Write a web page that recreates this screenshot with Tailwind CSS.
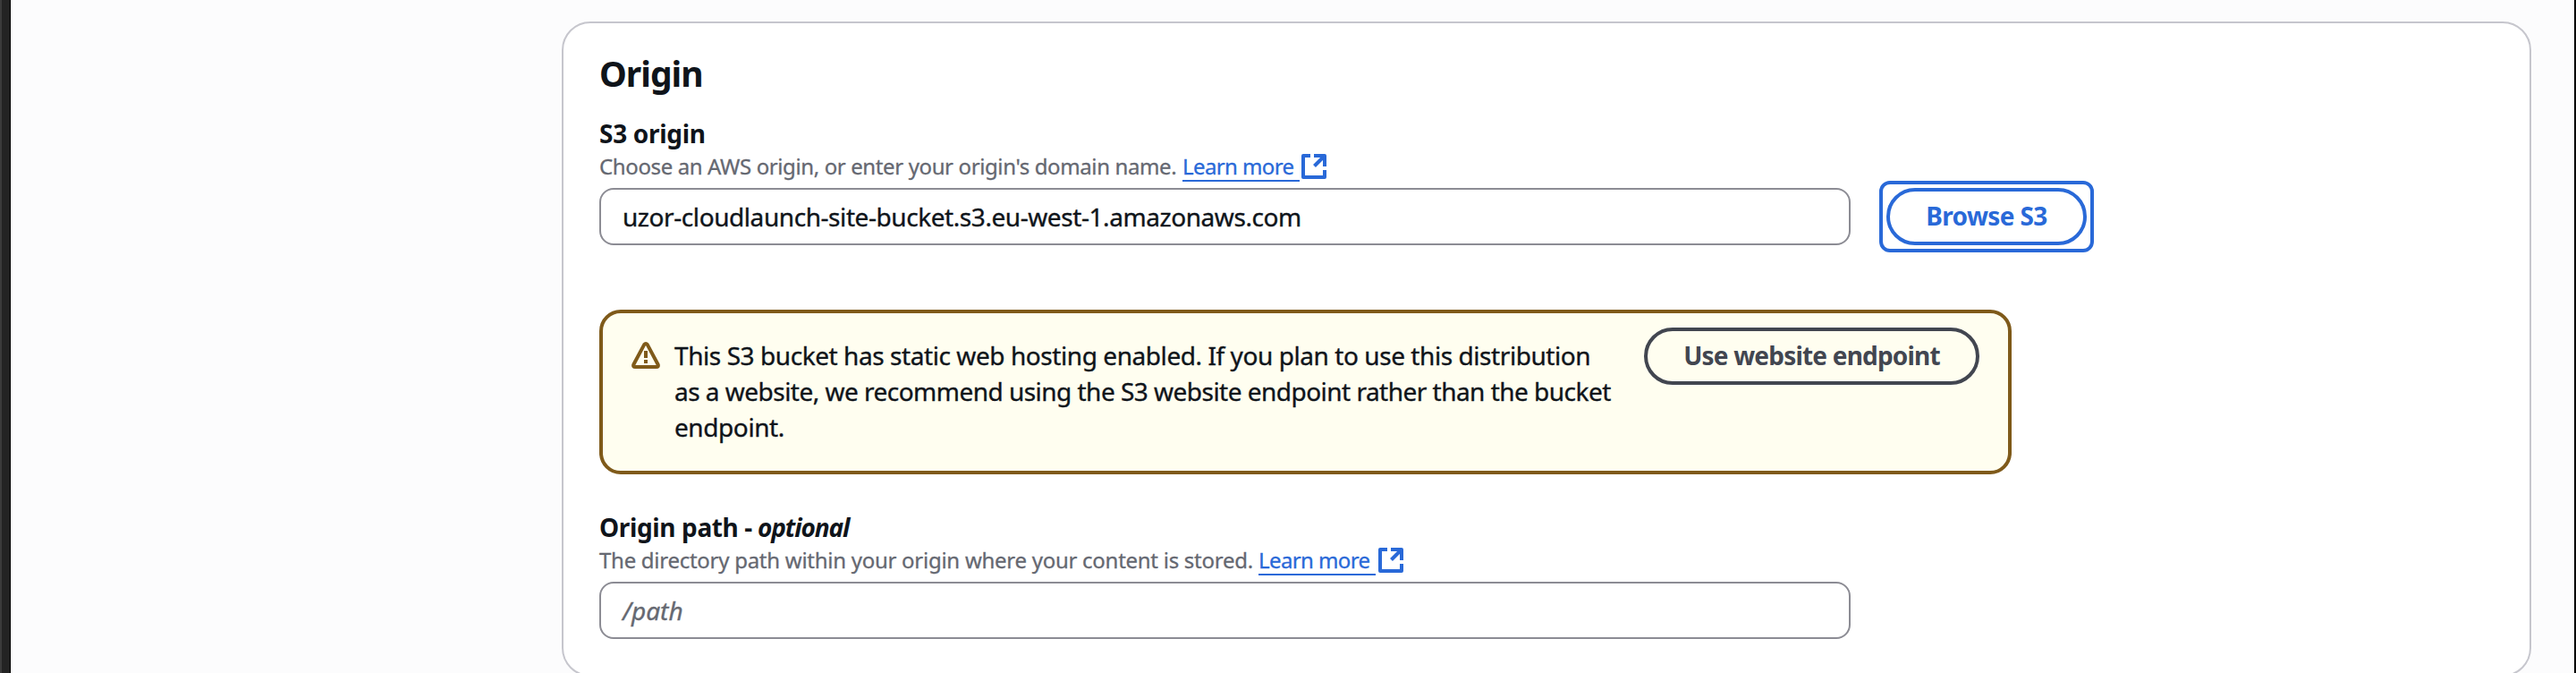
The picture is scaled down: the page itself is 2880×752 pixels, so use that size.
<!DOCTYPE html>
<html lang="en">
<head>
<meta charset="utf-8">
<title>Origin</title>
<script src="https://cdn.jsdelivr.net/npm/@tailwindcss/browser@4"></script>
</head>
<body class="flex h-[752px] w-[2880px] overflow-hidden bg-[#fcfcfd] font-['Noto_Sans',sans-serif] text-[28px] leading-10 text-[#0f141a]">
  <div class="w-3 shrink-0 border-l-2 border-r border-l-[#3b3b3b] border-r-black bg-[#232323]"></div>
  <main class="flex-1 pt-6 pl-[616px]">
    <section class="h-[732px] w-[2202px] rounded-[32px] border-2 border-[#c6c6cd] bg-white px-10 pt-8">
      <h2 class="text-[39px] leading-[48px] font-bold tracking-[-1px]">Origin</h2>

      <div class="mt-[23px]">
        <label class="block font-bold tracking-[-0.3px]">S3 origin</label>
        <p class="mt-px flex h-8 whitespace-nowrap text-2xl leading-8 tracking-[-0.38px] text-[#656871] [-webkit-text-stroke:0.3px]">
          <span class="w-[652px]">Choose an AWS origin, or enter your origin's domain name.</span>
          <a class="flex text-[#2969d8]">
            <span class="h-[33px] w-[131px] border-b-2 border-[#2969d8] tracking-[-0.6px]">Learn more</span>
            <svg class="mt-0.5 ml-0.5 size-7" viewBox="0 0 28 28" fill="none" stroke="currentColor" stroke-width="4" stroke-linejoin="round"><path d="M10 2H2v24h24v-8M14 2h12v12"/><path d="M26 2L14.5 13.5"/></svg>
          </a>
        </p>
        <div class="mt-2 flex">
          <div class="h-16 w-[1399px] rounded-2xl border-2 border-[#8c8c94] bg-white pl-6 leading-[60px] tracking-[-0.43px] [-webkit-text-stroke:0.35px]">uzor-cloudlaunch-site-bucket.s3.eu-west-1.amazonaws.com</div>
          <button class="relative ml-10 h-16 w-56 rounded-full border-4 border-[#2969d8] pb-0.5 text-center leading-[54px] font-bold tracking-[-0.6px] text-[#2969d8] before:absolute before:-inset-3 before:rounded-xl before:border-4 before:border-[#2969d8]">Browse S3</button>
        </div>
      </div>

      <div class="mt-[72px] flex h-[184px] w-[1579px] rounded-3xl border-4 border-[#7f5a1a] bg-[#fffef0] pl-8">
        <svg class="mt-8 h-[30px] w-8 shrink-0" viewBox="0 0 32 30" fill="none" stroke="#7f5a1a" stroke-width="4" stroke-linejoin="round"><path d="M14.2 3.1Q16 .9 17.8 3.1L29.6 25.2Q30.6 28 27.8 28H4.2Q1.400 28 2.400 25.2Z"/><path d="M16 10v8M16 20v4"/></svg>
        <p class="mt-[27px] ml-4 w-[1084px] whitespace-nowrap [-webkit-text-stroke:0.35px]"><span class="tracking-[-0.43px]">This S3 bucket has static web hosting enabled. If you plan to use this distribution</span><br><span class="tracking-[-0.52px]">as a website, we recommend using the S3 website endpoint rather than the bucket</span><br><span class="tracking-[-0.42px]">endpoint.</span></p>
        <button class="mt-4 h-16 w-[375px] rounded-full border-4 border-[#424650] pb-0.5 text-center leading-[54px] font-bold tracking-[-0.8px] text-[#424650]">Use website endpoint</button>
      </div>

      <div class="mt-[39px]">
        <label class="flex whitespace-nowrap font-bold"><span class="w-[177px] tracking-[-0.36px]">Origin path -</span><i class="tracking-[-1.1px]">optional</i></label>
        <p class="mt-px flex h-8 whitespace-nowrap text-2xl leading-8 tracking-[-0.27px] text-[#656871] [-webkit-text-stroke:0.3px]">
          <span class="w-[737px]">The directory path within your origin where your content is stored.</span>
          <a class="flex text-[#2969d8]">
            <span class="h-[33px] w-[131px] border-b-2 border-[#2969d8] tracking-[-0.6px]">Learn more</span>
            <svg class="mt-0.5 ml-[3px] size-7" viewBox="0 0 28 28" fill="none" stroke="currentColor" stroke-width="4" stroke-linejoin="round"><path d="M10 2H2v24h24v-8M14 2h12v12"/><path d="M26 2L14.5 13.5"/></svg>
          </a>
        </p>
        <div class="mt-2 h-16 w-[1399px] rounded-2xl border-2 border-[#8c8c94] bg-white pl-6 leading-[60px] text-[#656871] italic [-webkit-text-stroke:0.35px]">/path</div>
      </div>
    </section>
  </main>
  <div class="w-0.5 shrink-0 bg-black"></div>
</body>
</html>
